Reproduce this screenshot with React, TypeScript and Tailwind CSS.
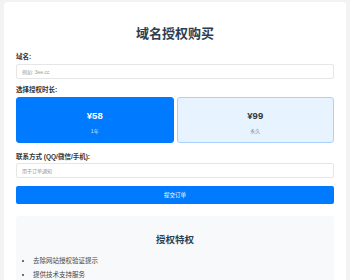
import { useState } from 'react';

const plans = [
  { id: '1y', price: '¥58', label: '1年' },
  { id: 'forever', price: '¥99', label: '永久' },
];

export default function App() {
  const [selected, setSelected] = useState('1y');

  return (
    <div className="min-h-screen bg-[#f3f3f3] px-[4px] pt-[2px] font-['Liberation_Sans','Noto_Sans_CJK_SC',sans-serif]">
      <div className="bg-white rounded-t-[4px] px-[12px] pt-[23px] pb-4">
        <h1 className="text-center text-[13px] leading-[18px] font-bold text-[#2c3e50]">域名授权购买</h1>

        <div className="mt-[9px]">
          <label className="block text-[6.5px] leading-[9px] font-bold text-[#333] mb-[3px]">域名:</label>
          <input
            type="text"
            placeholder="例如: 3ee.cc"
            className="block w-full h-[15px] border border-[#e6e6e6] rounded-[2px] px-[5px] text-[5px] text-[#333] placeholder:text-[#999] outline-none"
          />
        </div>

        <div className="mt-[6px]">
          <label className="block text-[6.5px] leading-[9px] font-bold text-[#333] mb-[3px]">选择授权时长:</label>
          <div className="grid grid-cols-2 gap-[3px]">
            {plans.map((plan) => {
              const active = plan.id === selected;
              return (
                <button
                  key={plan.id}
                  onClick={() => setSelected(plan.id)}
                  className={
                    active
                      ? 'h-[46px] rounded-[3px] bg-[#007bff] border border-[#007bff] flex flex-col items-center justify-center text-white'
                      : 'h-[46px] rounded-[3px] bg-[#e7f3ff] border border-[#a9d1ff] flex flex-col items-center justify-center text-[#333]'
                  }
                >
                  <span className="text-[9.5px] leading-[12px] font-bold mt-[4px]">{plan.price}</span>
                  <span className={active ? 'text-[5px] leading-[8px] mt-[5px] text-[#cfe4ff]' : 'text-[5px] leading-[8px] mt-[5px] text-[#888]'}>
                    {plan.label}
                  </span>
                </button>
              );
            })}
          </div>
        </div>

        <div className="mt-[9px]">
          <label className="block text-[6.5px] leading-[9px] font-bold text-[#333] mb-[2px]">联系方式 (QQ/微信/手机):</label>
          <input
            type="text"
            placeholder="用于订单通知"
            className="block w-full h-[15px] border border-[#e6e6e6] rounded-[2px] px-[5px] text-[5px] text-[#333] placeholder:text-[#999] outline-none"
          />
        </div>

        <button className="block mt-[8px] w-full h-[18px] rounded-[2px] bg-[#007bff] text-white text-[5.5px]">提交订单</button>

        <div className="mt-[12px] bg-[#f8f9fa] rounded-[3px] px-[16px] pt-[17px] pb-4">
          <h2 className="text-center text-[9.5px] leading-[13px] font-bold text-[#2c3e50]">授权特权</h2>
          <ul className="mt-[10px] list-disc pl-[1px] text-[6.5px] leading-[9px] text-[#444] space-y-[5px]">
            <li>去除网站授权验证提示</li>
            <li>提供技术支持服务</li>
            <li>免费更新升级</li>
          </ul>
        </div>
      </div>
    </div>
  );
}
